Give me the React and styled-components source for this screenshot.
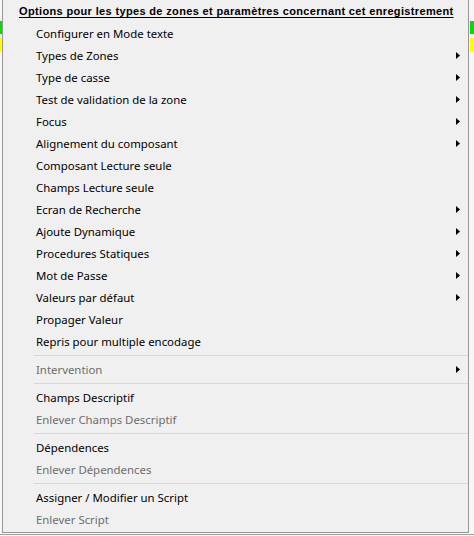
import React from "react";
import styled, { createGlobalStyle } from "styled-components";

const Global = createGlobalStyle`
  html, body { margin: 0; padding: 0; }
  body {
    width: 474px;
    height: 536px;
    overflow: hidden;
    background: #f4f4f4;
  }
`;

const Page = styled.div`
  position: relative;
  width: 474px;
  height: 536px;
  overflow: hidden;
  background:
    linear-gradient(#00e000, #00e000) 0 21px / 2px 13px no-repeat,
    linear-gradient(#ffff00, #ffff00) 0 38px / 2px 14px no-repeat,
    linear-gradient(#00e000, #00e000) 470px 21px / 4px 13px no-repeat,
    linear-gradient(#ffff00, #ffff00) 470px 38px / 4px 14px no-repeat,
    linear-gradient(#a0a0a0, #a0a0a0) 0 534px / 474px 1px no-repeat,
    #f7f7f7;
`;

const Menu = styled.div`
  position: absolute;
  left: 2px;
  top: -1px;
  width: 467px;
  height: 534px;
  box-sizing: border-box;
  background: #f0f0f0;
  border: 1px solid #979797;
  display: flex;
  flex-direction: column;
  font-family: "Noto Sans", "Open Sans", sans-serif;
  font-size: 11.4px;
  color: #000;
`;

const Title = styled.div`
  height: 22px;
  display: flex;
  align-items: center;
  padding-left: 16px;
  font-family: "Liberation Sans", Arial, sans-serif;
  font-weight: bold;
  font-size: 11px;
  letter-spacing: 0.35px;
  text-decoration: underline;
  text-underline-offset: 2px;
  white-space: nowrap;
`;

const Item = styled.div`
  height: 22px;
  display: flex;
  align-items: center;
  justify-content: space-between;
  padding-left: 33px;
  padding-right: 8px;
  color: ${(p) => (p.$disabled ? "#6d6d6d" : "#000")};
  white-space: nowrap;
`;

const Separator = styled.div`
  height: 6px;
  display: flex;
  align-items: center;
  padding-left: 31px;
  &::after {
    content: "";
    flex: 1;
    height: 1px;
    background: #d7d7d7;
  }
`;

const Arrow = styled.svg`
  width: 4px;
  height: 7px;
  flex: none;
`;

const SubArrow = () => (
  <Arrow viewBox="0 0 4 7">
    <path d="M0 0 L4 3.5 L0 7 Z" fill="#000" />
  </Arrow>
);

const groups = [
  [
    ["Configurer en Mode texte"],
    ["Types de Zones", true],
    ["Type de casse", true],
    ["Test de validation de la zone", true],
    ["Focus", true],
    ["Alignement du composant", true],
    ["Composant Lecture seule"],
    ["Champs Lecture seule"],
    ["Ecran de Recherche", true],
    ["Ajoute Dynamique", true],
    ["Procedures Statiques", true],
    ["Mot de Passe", true],
    ["Valeurs par défaut", true],
    ["Propager Valeur"],
    ["Repris pour multiple encodage"],
  ],
  [["Intervention", true, true]],
  [["Champs Descriptif"], ["Enlever Champs Descriptif", false, true]],
  [["Dépendences"], ["Enlever Dépendences", false, true]],
  [["Assigner / Modifier un Script"], ["Enlever Script", false, true]],
];

export default function App() {
  return (
    <Page>
      <Global />
      <Menu>
        <Title>Options pour les types de zones et paramètres concernant cet enregistrement</Title>
        {groups.map((g, gi) => (
          <React.Fragment key={gi}>
            {gi > 0 && <Separator />}
            {g.map(([label, sub, dis]) => (
              <Item key={label} $disabled={dis}>
                <span>{label}</span>
                {sub && <SubArrow />}
              </Item>
            ))}
          </React.Fragment>
        ))}
      </Menu>
    </Page>
  );
}
